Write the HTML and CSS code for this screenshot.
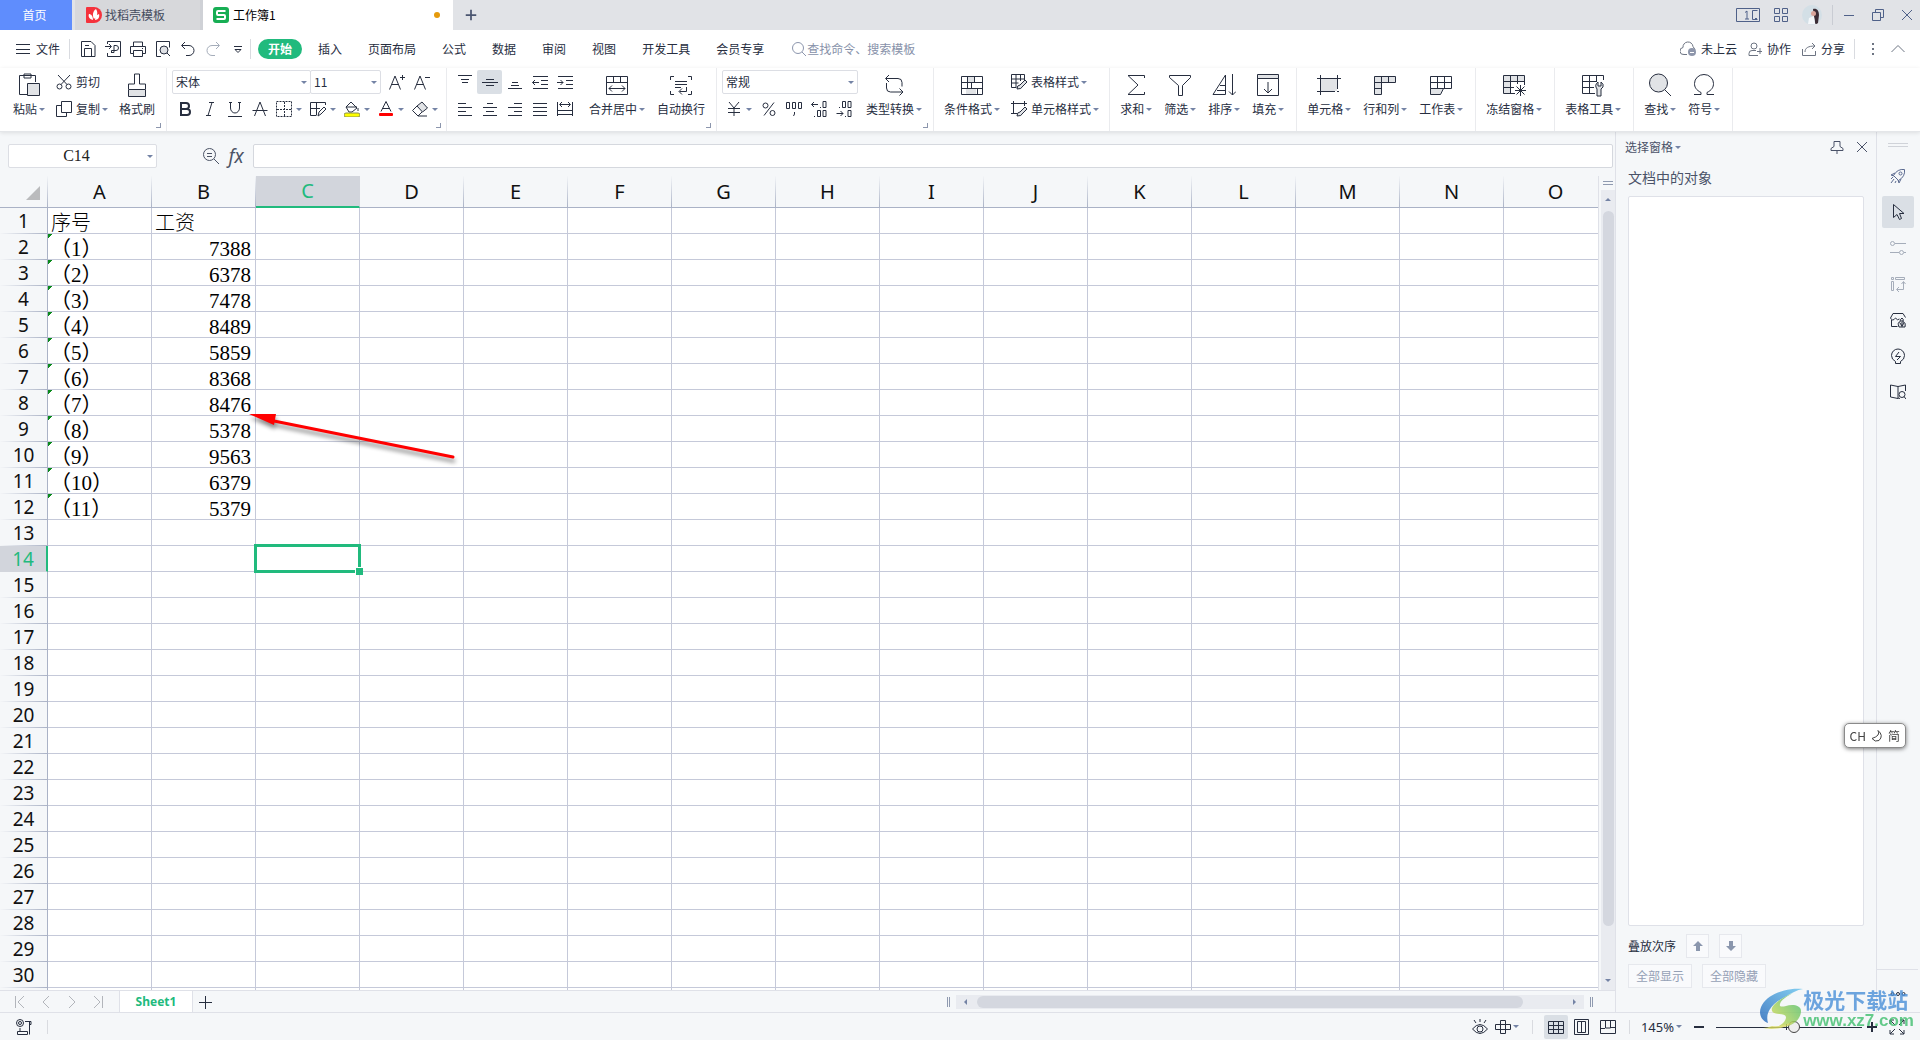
FILE: index.html
```html
<!DOCTYPE html>
<html lang="zh-CN">
<head>
<meta charset="utf-8">
<title>工作簿1</title>
<link rel="stylesheet" href="styles.css">
</head>
<body>
<header class="titlebar">
  <button class="tab tab-home">首页</button>
  <button class="tab tab-doc">
    <svg class="s16" viewBox="0 0 16 16"><path d="M1 0h7a8 8 0 0 1 0 16H1a1 1 0 0 1-1-1V1a1 1 0 0 1 1-1z" fill="#f5323c" stroke="none"/><path d="M7 13C3 12 2 9 3 7c2 0 4 2 4 6zM8 12C6 8 7 4 10 2c2 3 2 7-2 10zM9 13c0-3 1-5 4-6 1 3-1 6-4 6z" fill="#fff" stroke="none"/></svg>
    找稻壳模板
  </button>
  <button class="tab tab-active">
    <svg class="s16" viewBox="0 0 16 16"><rect width="16" height="16" rx="3" fill="#17ae54" stroke="none"/><path d="M12.500 4H5a1 1 0 0 0-1 1v2a1 1 0 0 0 1 1h6a1 1 0 0 1 1 1v2a1 1 0 0 1-1 1H3.500" fill="none" stroke="#fff" stroke-width="2"/></svg>
    工作簿1<span class="unsaved"></span>
  </button>
  <button class="newtab" aria-label="新建"><svg class="s16" viewBox="0 0 16 16"><path d="M8 2v12M2 8h12" stroke="#4a5570" stroke-width="2"/></svg></button>
  <div class="window-tools">
    <button aria-label="布局"><svg class="s24" viewBox="0 0 24 24"><path d="M.5 5.500h23v13H.5zM21.500 7.500h-5v9h5M19 15.500h2M9 9.500l2-1.500v8M9 16h4"/></svg></button>
    <button aria-label="应用"><svg class="s16" viewBox="0 0 16 16"><path d="M1.500 1.500h5v5h-5zM9.500 1.500h5v5h-5zM1.500 9.500h5v5h-5zM9.500 9.500h5v5h-5z"/></svg></button>
    <button aria-label="账户"><svg class="s20" viewBox="0 0 20 20"><circle cx="10" cy="10" r="10" fill="#d3dfe6" stroke="none"/><path d="M11 4c4-1 6 2 6 6l-1 8c-2 2-3 1-3-1l-1-5z" fill="#3b2c35" stroke="none"/><circle cx="11.500" cy="8.500" r="2.500" fill="#d9a49a" stroke="none"/><path d="M6 19l1-6 5-2 1 8z" fill="#f4f7fa" stroke="none"/></svg></button>
    <i class="vline"></i>
    <button aria-label="最小化"><svg class="s12" viewBox="0 0 12 12"><path d="M1 6.500h10"/></svg></button>
    <button aria-label="还原"><svg class="s12" viewBox="0 0 12 12"><path d="M.5 3.500h8v8h-8zM3.500 3V.5h8v8H9"/></svg></button>
    <button aria-label="关闭"><svg class="s12" viewBox="0 0 12 12"><path d="M1 1l10 10M11 1L1 11"/></svg></button>
  </div>
</header>

<nav class="menubar">
  <button class="file"><svg class="s14" viewBox="0 0 14 14"><path d="M0 2.500h14M0 7.500h14M0 11.500h14"/></svg>文件</button>
  <i class="vline"></i>
  <div class="quick">
    <button class="ib" aria-label="保存"><svg class="s16" viewBox="0 0 16 16"><path d="M2 .5h9l4 4v11H1.500v-15zM4.500 15V7.500h7V15M5 4.500h4"/></svg></button>
    <button class="ib" aria-label="输出为PDF"><svg class="s16" viewBox="0 0 16 16"><path d="M2.500 3V.5h13v15h-13V12M0 5.500h6M4 3l2.500 2.500L4 8M6 11.500h3v-7h2a2 2 0 0 1 0 5H6.500v2"/></svg></button>
    <button class="ib" aria-label="打印"><svg class="s16" viewBox="0 0 16 16"><path d="M3.500 5V1h9v4M3.500 12.500h-3v-7h15v7h-3M3.500 9.500h9v6h-9zM12 7.500h1"/></svg></button>
    <button class="ib" aria-label="打印预览"><svg class="s16" viewBox="0 0 16 16"><path d="M6 15.500H1.500V.5h13v6"/><circle cx="9" cy="9" r="4" fill="#dfe1e5"/><path d="M12 12l3 3"/></svg></button>
    <button class="ib" aria-label="撤销"><svg class="s16" viewBox="0 0 16 16"><path d="M5 1L1.500 4.500 5 8M2 4.500h7a5 5 0 0 1 0 10H6"/></svg></button>
    <button class="ib faint" aria-label="恢复"><svg class="s16" viewBox="0 0 16 16"><path d="M11 1l3.500 3.500L11 8M14 4.500H7a5 5 0 0 0 0 10h3"/></svg></button>
    <button class="ib" aria-label="更多命令"><svg class="s12" viewBox="0 0 12 12"><path d="M2 3.500h8M3 6.500l3 3 3-3z"/></svg></button>
  </div>
  <i class="vline"></i>
  <button class="menu current">开始</button>
  <button class="menu">插入</button>
  <button class="menu">页面布局</button>
  <button class="menu">公式</button>
  <button class="menu">数据</button>
  <button class="menu">审阅</button>
  <button class="menu">视图</button>
  <button class="menu">开发工具</button>
  <button class="menu">会员专享</button>
  <label class="search"><svg class="s16" viewBox="0 0 16 16"><circle cx="7" cy="7" r="5.500"/><path d="M11 11l4 4"/></svg><input type="text" placeholder="查找命令、搜索模板"></label>
  <div class="cloud">
    <button><svg class="s16" viewBox="0 0 16 16"><path d="M7 13.500H4a3.500 3.500 0 0 1-1-7 5 5 0 0 1 10-1l2 3"/><circle cx="12" cy="11" r="4" fill="#8e96ab" stroke="none"/><path d="M10 11.500h4" stroke="#fff"/></svg>未上云</button>
    <button><svg class="s14" viewBox="0 0 14 14"><circle cx="6" cy="4" r="3"/><path d="M1 13.500v-2q0-3 3-3h4M1 13.500h9M12 6v6M9 9.500h5"/></svg>协作</button>
    <button><svg class="s14" viewBox="0 0 14 14"><path d="M.5 7v6.500h13V9M3 10c0-4 3-6 10-6M10 1l3 3-3 3"/></svg>分享</button>
    <i class="vline"></i>
    <button aria-label="更多"><svg class="s14" viewBox="0 0 14 14"><path d="M7 1v2M7 6v2M7 11v2" stroke-width="2"/></svg></button>
    <button aria-label="收起功能区"><svg class="s14" viewBox="0 0 14 14"><path d="M.5 10L7 3.500l6.500 6.500"/></svg></button>
  </div>
</nav>

<section class="ribbon">
  <div class="group group-clip">
    <button class="big"><svg class="s24" viewBox="0 0 24 24"><path d="M10 21.500H2.500v-19H18.500V9M7 1h7v4H7z"/><path d="M10.500 10.500h12v12h-12z" fill="#e1e3e6"/></svg><span class="caret">粘贴</span></button>
    <div class="rows">
      <button class="small"><svg class="s16" viewBox="0 0 16 16"><circle cx="3.500" cy="12.500" r="2.500"/><circle cx="12.500" cy="12.500" r="2.500"/><path d="M2 1l9 9.500M14 1L5 10.500"/></svg>剪切</button>
      <button class="small"><svg class="s16" viewBox="0 0 16 16"><path d="M5.500.5h10v11h-10zM5 4.500H.5v11h10V12"/></svg><span class="caret">复制</span></button>
    </div>
    <button class="big"><svg class="s24" viewBox="0 0 24 24"><path d="M3.500 16.500h17v7h-17z" fill="#e1e3e6"/><path d="M3.500 16v-5H9.500V1h5v10h6v5"/></svg><span>格式刷</span></button>
    <i class="corner"></i>
  </div>

  <div class="group group-edit">
    <div class="rows">
      <div class="row">
        <span class="combo combo-font"><select aria-label="字体"><option>宋体</option></select></span>
        <span class="combo combo-size"><select aria-label="字号"><option>11</option></select></span>
        <button class="ib" aria-label="增大字号"><svg class="s16" viewBox="0 0 16 16"><path d="M.5 15.500L6 2l5.500 13.500M2.500 10.500h7M11 3.500h5M13.500 1v5"/></svg></button>
        <button class="ib" aria-label="减小字号"><svg class="s16" viewBox="0 0 16 16"><path d="M.5 15.500L6 2l5.500 13.500M2.500 10.500h7M11 3.500h5"/></svg></button>
      </div>
      <div class="row">
        <button class="ib" aria-label="加粗"><svg class="s16" viewBox="0 0 16 16"><path d="M4 2h5a3 3 0 0 1 0 6H4zM4 8h6a3 3 0 0 1 0 6H4z" stroke-width="2"/></svg></button>
        <button class="ib" aria-label="倾斜"><svg class="s16" viewBox="0 0 16 16"><path d="M7 1.500h5M4 14.500h5M10 1.500l-4 13"/></svg></button>
        <button class="ib" aria-label="下划线"><svg class="s16" viewBox="0 0 16 16"><path d="M3.500 1v6a4.500 5 0 0 0 9 0V1M2 1.500h3M11 1.500h3M1 15.500h14"/></svg></button>
        <button class="ib" aria-label="删除线"><svg class="s16" viewBox="0 0 16 16"><path d="M2.500 15L8 1l5.500 14M.5 9.500h15"/></svg></button>
        <button class="ib drop" aria-label="边框"><svg class="s16" viewBox="0 0 16 16"><path d="M.5.5h15v15H.5zM8.500 1v14M1 8.500h14" stroke-dasharray="2 1"/></svg></button>
        <button class="ib drop" aria-label="绘制边框"><svg class="s16" viewBox="0 0 16 16"><path d="M15.500 4V1.500H.5v13h6M6.500 2v12M1 7.500h9M8 15l1-4 5-5 2 2-5 5z"/></svg></button>
        <button class="ib drop" aria-label="填充颜色"><svg class="s16" viewBox="0 0 16 16"><path d="M2 6l5-5 6 6-5 4H5zM2 6h11M14 7v3"/><rect y="12" width="16" height="4" rx="2" fill="#ff0" stroke="#8a8f52"/></svg></button>
        <button class="ib drop" aria-label="字体颜色"><svg class="s16" viewBox="0 0 16 16"><path d="M3 10.500L8 .5l5 10M5 7.500h6"/><rect x="1" y="12" width="14" height="3" rx="1" fill="#f00" stroke="none"/></svg></button>
        <button class="ib drop" aria-label="清除"><svg class="s16" viewBox="0 0 16 16"><path d="M5 5l5-4 5.500 6-5 4z" fill="#e1e3e6"/><path d="M10 11l-4 4L.5 9.500 5 5M6 15h9"/></svg></button>
      </div>
    </div>
    <i class="corner"></i>
  </div>

  <div class="group group-edit">
    <div class="rows">
      <div class="row">
        <button class="ib" aria-label="顶端对齐"><svg class="s16" viewBox="0 0 16 16"><path d="M1 1.500h14M4 5.500h8M5 8.500h6"/></svg></button>
        <button class="ib pressed" aria-label="垂直居中"><svg class="s16" viewBox="0 0 16 16"><path d="M4 5.500h8M0 8.500h16M4 11.500h8"/></svg></button>
        <button class="ib" aria-label="底端对齐"><svg class="s16" viewBox="0 0 16 16"><path d="M5 8.500h6M4 11.500h8M1 14.500h14"/></svg></button>
        <button class="ib" aria-label="减少缩进"><svg class="s16" viewBox="0 0 16 16"><path d="M1 2.500h15M9 6.500h7M9 10.500h7M1 14.500h15M7 8.500H.5M3 6L.5 8.500 3 11"/></svg></button>
        <button class="ib" aria-label="增加缩进"><svg class="s16" viewBox="0 0 16 16"><path d="M1 2.500h15M9 6.500h7M9 10.500h7M1 14.500h15M0 8.500h6M3.500 6L6 8.500 3.500 11"/></svg></button>
      </div>
      <div class="row">
        <button class="ib" aria-label="左对齐"><svg class="s16" viewBox="0 0 16 16"><path d="M1 2.500h8M1 6.500h14M1 10.500h8M1 14.500h14"/></svg></button>
        <button class="ib" aria-label="水平居中"><svg class="s16" viewBox="0 0 16 16"><path d="M5 2.500h6M1 6.500h14M4 10.500h8M1 14.500h14"/></svg></button>
        <button class="ib" aria-label="右对齐"><svg class="s16" viewBox="0 0 16 16"><path d="M7 2.500h8M1 6.500h14M7 10.500h8M1 14.500h14"/></svg></button>
        <button class="ib" aria-label="两端对齐"><svg class="s16" viewBox="0 0 16 16"><path d="M1 2.500h14M1 6.500h14M1 10.500h14M1 14.500h14"/></svg></button>
        <button class="ib" aria-label="分散对齐"><svg class="s16" viewBox="0 0 16 16"><path d="M.5 1v14M15.500 1v14M3 3.500h10M5 1L2.500 3.500 5 6M11 1l2.500 2.500L11 6M1 9.500h14M1 13.500h14"/></svg></button>
      </div>
    </div>
    <div class="pair">
      <button class="big"><svg class="s24" viewBox="0 0 24 24"><path d="M1.500 3.500h21v18h-21zM2 9.500h20M8.500 4v5M15.500 4v5M4 15.500h16M7 12.500l-3 3 3 3M17 12.500l3 3-3 3"/></svg><span class="caret">合并居中</span></button>
      <button class="big"><svg class="s24" viewBox="0 0 24 24"><path d="M5 3.500H1.500V7M19 3.500h3.500V7M5 21.500H1.500V18M19 21.500h3.500V18M6 8.500h12M6 11.500h12M6 14.500h6M17.500 14v4.500h-7M13 15.500l-3 3 3 3"/></svg><span>自动换行</span></button>
    </div>
    <i class="corner"></i>
  </div>

  <div class="group group-edit">
    <div class="rows">
      <div class="row"><span class="combo combo-number"><select aria-label="数字格式"><option>常规</option></select></span></div>
      <div class="row">
        <button class="ib drop" aria-label="货币"><svg class="s16" viewBox="0 0 16 16"><path d="M3 1l5 6 5-6M2 7.500h12M2 11.500h12M8 7v8"/></svg></button>
        <button class="ib" aria-label="百分比"><svg class="s16" viewBox="0 0 16 16"><circle cx="4.500" cy="4.500" r="2.500"/><circle cx="11.500" cy="12" r="2.500"/><path d="M13 1.500l-10 13"/></svg></button>
        <button class="ib" aria-label="千位分隔"><svg class="s16" viewBox="0 0 16 16"><path d="M.5 1.500h3v6h-3zM6.500 1.500h3v6h-3zM12.500 1.500h3v6h-3zM8.500 11v2l-1 2"/></svg></button>
        <button class="ib" aria-label="增加小数位"><svg class="s16" viewBox="0 0 16 16"><path d="M12 .5h3v6h-3zM6.500 9.500h3v6h-3zM12 9.500h3v6h-3zM.5 3.500H7M3 1L.5 3.500 3 6M9.500 6v1M3.500 15v1"/></svg></button>
        <button class="ib" aria-label="减少小数位"><svg class="s16" viewBox="0 0 16 16"><path d="M6.500.5h3v6h-3zM12 .5h3v6h-3zM12 9.500h3v6h-3zM.5 12.500H7M4.500 10L7 12.500 4.500 15M3.500 6v1M9.500 15v1"/></svg></button>
      </div>
    </div>
    <button class="big near"><svg class="s24" viewBox="0 0 24 24"><path d="M7 2L3.500 5.500 7 9M4 5.500h12q4 0 4 4v4M4.500 10v5q0 4 4 4H21M17.500 15.500l3.500 3.500-3.500 3.500"/></svg><span class="caret">类型转换</span></button>
    <i class="corner"></i>
  </div>

  <div class="group group-style">
    <button class="big"><svg class="s24" viewBox="0 0 24 24"><path d="M8 4h6v5H8zM6 15h10v6H6z" fill="#e1e3e6" stroke="none"/><path d="M1.500 3.500h21v18h-21zM2 9.500h20M2 15.500h20M7.500 4v11M14.500 4v5M11.500 10v5M17.500 15v6"/></svg><span class="caret">条件格式</span></button>
    <div class="rows">
      <button class="small"><svg class="s16" viewBox="0 0 16 16"><path d="M13.500 6V.5H.5v13h5M.5 5h13M.5 9h7M5 1v12M9.500 1v6"/><path d="M6 15q0-4 3-4l5-5 2 2-5 5q0 2-5 2z" fill="#e1e3e6"/></svg><span class="caret">表格样式</span></button>
      <button class="small"><svg class="s16" viewBox="0 0 16 16"><path d="M0 2.500h16M2.500 0v13M0 12.500h6M13.500 0v5"/><path d="M6 15q0-4 3-4l5-5 2 2-5 5q0 2-5 2z" fill="#e1e3e6"/></svg><span class="caret">单元格样式</span></button>
    </div>
  </div>

  <div class="group">
    <button class="big"><svg class="s24" viewBox="0 0 24 24"><path d="M20.500 5V2.500H4L14 12 4 21.500h16.500V19"/></svg><span class="caret">求和</span></button>
    <button class="big"><svg class="s24" viewBox="0 0 24 24"><path d="M1.500 2.500h21v2l-8 8v10h-4v-10l-9-8z"/></svg><span class="caret">筛选</span></button>
    <button class="big"><svg class="s24" viewBox="0 0 24 24"><path d="M1 21.500L13.500 2v19.500zM8 12.500h5M5 17.500h8M20.500 1v21M17 18.500l3.500 3.500 3.500-3.500"/></svg><span class="caret">排序</span></button>
    <button class="big"><svg class="s24" viewBox="0 0 24 24"><path d="M1.500 1.500h21v4h-21z" fill="#e1e3e6"/><path d="M1.500 5.500h21v17h-21zM12 9v11M8 16l4 4 4-4"/></svg><span class="caret">填充</span></button>
  </div>

  <div class="group">
    <button class="big"><svg class="s24" viewBox="0 0 24 24"><path d="M4 6h16v12H4z" fill="#e1e3e6" stroke="none"/><path d="M0 5.500h24M3.500 2v20M20.500 2v14M0 18.500h18M20 18.500h2"/></svg><span class="caret">单元格</span></button>
    <button class="big"><svg class="s24" viewBox="0 0 24 24"><path d="M1.500 3.500h21v6h-14v12h-7z" fill="#e1e3e6"/><path d="M8.500 4v6M15.500 4v5M2 9.500h7M2 15.500h6"/></svg><span class="caret">行和列</span></button>
    <button class="big"><svg class="s24" viewBox="0 0 24 24"><path d="M1.500 3.500h21v12h-21zM8.500 4v11M15.500 4v11M2 9.500h20"/><path d="M1.500 15.500h13l-3 6h-10z" fill="#e1e3e6"/></svg><span class="caret">工作表</span></button>
  </div>

  <div class="group">
    <button class="big"><svg class="s24" viewBox="0 0 24 24"><path d="M2 3h20v6H2zM2 9h6v11H2z" fill="#e1e3e6" stroke="none"/><path d="M22.500 12V2.500h-21v18H13M2 8.500h20M8.500 3v17M15.500 3v8M2 14.500h10M18.500 12v11M13 17.500h11M14.500 13.500l8 8M22.500 13.500l-8 8"/></svg><span class="caret">冻结窗格</span></button>
  </div>
  <div class="group">
    <button class="big"><svg class="s24" viewBox="0 0 24 24"><path d="M22.500 7V2.500h-21v18H14M2 8.500h14M8.500 3v17M15.500 3v6M2 14.500h11"/><path d="M17 9v4h3V9q3 2 2 5l-2 2v7h-4v-7q-3-4 1-7z" fill="#e1e3e6"/></svg><span class="caret">表格工具</span></button>
  </div>
  <div class="group">
    <button class="big"><svg class="s24" viewBox="0 0 24 24"><circle cx="10.500" cy="10" r="9" fill="#e1e3e6"/><path d="M17 17l6 6"/></svg><span class="caret">查找</span></button>
    <button class="big"><svg class="s24" viewBox="0 0 24 24"><path d="M2 21.500h7v-2C4 17 2.500 14 2.500 10.500a9.500 9 0 0 1 19 0c0 3.500-1.500 6.500-6.500 9v2h7"/></svg><span class="caret">符号</span></button>
  </div>
</section>

<main class="work">
  <section class="book">
    <div class="formula">
      <span class="combo namebox"><input type="text" value="C14" aria-label="名称框"></span>
      <button aria-label="搜索函数"><svg class="s16" viewBox="0 0 16 16"><circle cx="6.500" cy="6.500" r="6"/><path d="M11 11l5 5M4 5.500h5M4 8.500h5"/></svg></button>
      <button class="fx">fx</button>
      <input class="fxinput" type="text" aria-label="编辑栏">
    </div>
    <div class="sheet">
      <div class="viewport">
        <table class="cells"><thead><tr id="cols"></tr></thead><tbody id="rows"></tbody></table>
        <svg class="pointer" viewBox="0 0 220 60"><path d="M24 11L208 48" stroke="#f00" stroke-width="3" stroke-linecap="round"/><path d="M4 5l27 0-2 11z" fill="#f00" stroke="none"/></svg>
      </div>
      <div class="vscroll">
        <i class="split"></i>
        <div class="vtrack"><b class="up"></b><i class="thumb"></i><b class="down"></b></div>
      </div>
    </div>
    <div class="sheets">
      <button class="nav" aria-label="第一个"><svg class="s12" viewBox="0 0 12 12"><path d="M1.500 0v12M10 0L4 6l6 6"/></svg></button>
      <button class="nav" aria-label="上一个"><svg class="s12" viewBox="0 0 12 12"><path d="M9 0L3 6l6 6"/></svg></button>
      <button class="nav" aria-label="下一个"><svg class="s12" viewBox="0 0 12 12"><path d="M3 0l6 6-6 6"/></svg></button>
      <button class="nav" aria-label="最后一个"><svg class="s12" viewBox="0 0 12 12"><path d="M10.500 0v12M2 0l6 6-6 6"/></svg></button>
      <button class="sheet-tab">Sheet1</button>
      <button class="add" aria-label="新建工作表"><svg class="s14" viewBox="0 0 14 14"><path d="M7.500 1v13M1 7.500h13"/></svg></button>
      <div class="hscroll"><i class="grip"></i><div class="htrack"><b class="left"></b><i class="thumb"></i><b class="right"></b></div><i class="grip"></i></div>
    </div>
  </section>

  <aside class="pane">
    <div class="pane-head"><button class="pane-title caret">选择窗格</button>
      <button class="ib push" aria-label="固定"><svg class="s14" viewBox="0 0 14 14"><path d="M4 1.500h6v5l3 2v2H1v-2l3-2zM7 11v3"/></svg></button>
      <button class="ib" aria-label="关闭窗格"><svg class="s12" viewBox="0 0 12 12"><path d="M1 1l10 10M11 1L1 11"/></svg></button>
    </div>
    <h2>文档中的对象</h2>
    <div class="objects"></div>
    <div class="order"><span>叠放次序</span>
      <button aria-label="上移"><svg class="s12" viewBox="0 0 12 12"><path d="M6 1l5 5H8v5H4V6H1z" fill="#8a96ad" stroke="none"/></svg></button>
      <button aria-label="下移"><svg class="s12" viewBox="0 0 12 12"><path d="M6 11l5-5H8V1H4v5H1z" fill="#8a96ad" stroke="none"/></svg></button>
    </div>
    <div class="show"><button>全部显示</button><button>全部隐藏</button></div>
  </aside>

  <aside class="rail">
    <i class="handle"></i>
    <button class="slate" aria-label="快速"><svg class="s16" viewBox="0 0 16 16"><path d="M14.500 1.500q1 7-6 11l-5-5q4-7 11-6zM5 5L1 7l3 1M11 11l-2 4-1-3M1 11l2-2M1 15l3-4M5 15l1-2"/><circle cx="10.500" cy="5.500" r="1.500"/></svg></button>
    <button class="pressed" aria-label="选择"><svg class="s16" viewBox="0 0 16 16"><path d="M3.500.5v13l3.500-3 2.500 5 2-1-2-5h4.500z"/></svg></button>
    <button class="faint" aria-label="属性"><svg class="s16" viewBox="0 0 16 16"><circle cx="2.500" cy="3.500" r="2"/><circle cx="11.500" cy="12.500" r="2"/><path d="M5 3.500h11M0 12.500h9M14 12.500h2"/></svg></button>
    <button class="faint" aria-label="分析"><svg class="s16" viewBox="0 0 16 16"><path d="M1.500 1.500h2v2h-2zM5.500 1.500h9v2h-9zM1.500 5.500h2v9h-2zM13.500 6v7.500H7M11.500 8l2-2.500 2 2.500M9 11l-2.500 2.500L9 16"/></svg></button>
    <button aria-label="素材"><svg class="s16" viewBox="0 0 16 16"><path d="M.5 6L3 1.500h10l2.500 4M.5 6q2 4 5 0 2 3 4 1M1.500 8v6.500h6"/><path d="M9 15q-2-5 1-5 0-3 2-4 2 1 1 4 3 0 2 5z" fill="#e1e3e6"/><path d="M12 8v7M10 11l2 3 2-3"/></svg></button>
    <button aria-label="帮助"><svg class="s16" viewBox="0 0 16 16"><path d="M5.500 15.500v-2q-4-2-4-6a6.500 6.500 0 0 1 13 0q0 4-4 6v2zM9 4L5.500 8.500h5L7 12"/></svg></button>
    <button aria-label="教程"><svg class="s16" viewBox="0 0 16 16"><path d="M8 2.500L.5 1v12L8 14.500V2.500L15.500 1v6M8 14l2 .5"/><circle cx="12" cy="10.500" r="3"/><path d="M14 12.500l2 2.500"/></svg></button>
    <div class="rail-end"><button aria-label="更多"><svg class="s16" viewBox="0 0 16 16"><circle cx="2.500" cy="8" r="1.500"/><circle cx="8" cy="8" r="1.500"/><circle cx="13.500" cy="8" r="1.500"/></svg></button></div>
  </aside>
</main>

<footer class="status">
  <button class="macro" aria-label="宏"><svg class="s16" viewBox="0 0 16 16"><circle cx="4" cy="4" r="3.500"/><circle cx="4" cy="4" r="1.500"/><path d="M9 2.500h6v3h-2M13.500 3v12.500M4 9v3M1.500 12.500h10v3h-10z"/></svg></button>
  <i class="vline"></i>
  <div class="views">
    <button aria-label="护眼"><svg class="s16" viewBox="0 0 16 16"><path d="M.5 10q7.500-9 15 0-7.500 9-15 0zM8 0v3M2 1l2 3M14 1l-2 3"/><circle cx="8" cy="10" r="3"/></svg></button>
    <button class="caret reading" aria-label="阅读模式"><svg class="s16" viewBox="0 0 16 16"><path d="M5.500 1.500h5v13h-5zM.5 5.500h15v5H.5z"/></svg></button>
    <i class="vline"></i>
    <div class="modes">
      <button class="pressed" aria-label="普通视图"><svg class="s16" viewBox="0 0 16 16"><path d="M.5 2.500h15v12H.5zM1 6.500h14M1 10.500h14M5.500 3v11M10.500 3v11"/></svg></button>
      <button aria-label="页面布局"><svg class="s16" viewBox="0 0 16 16"><path d="M.5.5h14v15H.5zM3.500 2.500h8v11h-8zM7.500 3v10"/></svg></button>
      <button aria-label="分页预览"><svg class="s16" viewBox="0 0 16 16"><path d="M.5 1.500h15v13H.5zM5.500 2v7h5V2M1 9.500h4M10.500 8.500H15"/></svg></button>
    </div>
    <i class="vline"></i>
    <button class="caret percent">145%</button>
    <button aria-label="缩小"><svg class="s12" viewBox="0 0 12 12"><path d="M1 6h10" stroke-width="2"/></svg></button>
    <input class="zoom" type="range" min="0" max="100" value="54" aria-label="显示比例">
    <button aria-label="放大"><svg class="s12" viewBox="0 0 12 12"><path d="M1 6h10M6 1v10" stroke-width="2"/></svg></button>
    <button aria-label="全屏"><svg class="s16" viewBox="0 0 16 16"><path d="M1 5V1h4M11 1h4v4M1 11v4h4M15 11v4h-4M1 1l5 5M15 1l-5 5M1 15l5-5M15 15l-5-5"/></svg></button>
  </div>
</footer>

<div class="ime">CH<svg class="s12" viewBox="0 0 12 12"><path d="M7 .5q3 5-6 8 3 4 7 2 5-5-1-10z"/></svg>简</div>
<div class="brand">
  <svg viewBox="0 0 44 42"><defs><linearGradient id="b" x1="0" y1="1" x2="1" y2="0"><stop offset="0" stop-color="#1f62b8"/><stop offset="1" stop-color="#66c4ef"/></linearGradient><linearGradient id="g" x1="1" y1="0" x2="0" y2="1"><stop offset="0" stop-color="#3dba6c"/><stop offset="1" stop-color="#e2dd4e"/></linearGradient></defs><path d="M44 1C24-1 2 9 1 24c0 5 3 9 8 11-3-10 3-19 17-26C32 5 38 2 44 1z" fill="url(#b)"/><path d="M34 5C20 11 11 18 13 23c2 5 13 1 14 6 0 4-4 8-11 11 18 0 26-9 26-17 0-6-9-7-15-5-4 1-7 1-6-2 1-4 7-8 13-11z" fill="url(#g)"/><path d="M13 38c-3 1-6 2-9 2 8 2 24 1 31-7-7 4-15 6-22 5z" fill="#d8d960"/></svg>
  <div><strong>极光下载站</strong><span>www.xz7.com</span></div>
</div>
<script src="script.js"></script>
</body>
</html>
```
FILE: styles.css
```css
* { box-sizing: border-box; }
:root { --ink: #272e3f; --soft: #7483a5; --line: #dfe1e8; --bg: #f5f7f9; --green: #21ba7d; --press: #dadfe5; }
body {
  margin: 0; height: 100vh; display: flex; flex-direction: column; overflow: hidden;
  background: var(--bg); color: var(--ink);
  font: 12px/16px "Noto Sans CJK SC", "Noto Sans", sans-serif;
}
button { border: 0; padding: 0; margin: 0; background: none; color: inherit; font: inherit; display: flex; align-items: center; justify-content: center; white-space: nowrap; flex: none; }
input, select { font: inherit; color: inherit; border: 0; margin: 0; outline: 0; background: none; min-width: 0; }
svg { fill: none; stroke: currentColor; flex: none; display: block; }
.s12 { width: 12px; height: 12px; }
.s14 { width: 14px; height: 14px; }
.s16 { width: 16px; height: 16px; }
.s20 { width: 20px; height: 20px; }
.s24 { width: 24px; height: 24px; }
.vline { width: 1px; height: 20px; background: #d9dbe0; flex: none; }
.faint { color: #a5adba; }
.pressed { background: var(--press); border-radius: 2px; }
.caret::after { content: ""; border: 3px solid transparent; border-top-color: var(--soft); border-bottom: 0; display: inline-block; margin-left: 2px; vertical-align: 3px; }

/* title bar */
.titlebar { display: flex; height: 30px; background: #e1e3e7; flex: none; }
.tab { height: 30px; }
.tab-home { width: 72px; padding-right: 3px; background: #5f8dfd; color: #fff; margin-right: 3px; }
.tab-doc { width: 128px; padding-left: 11px; gap: 3px; justify-content: flex-start; background: #d7d8db; border-right: 3px solid #cfd1d6; color: #454c5e; }
.tab-active { width: 250px; padding: 0 13px 0 10px; gap: 4px; justify-content: flex-start; background: #fff; color: #000; }
.unsaved { width: 6px; height: 6px; border-radius: 50%; background: #e59a0c; margin-left: auto; }
.newtab { width: 36px; }
.newtab svg { width: 14px; }
.window-tools { margin-left: auto; display: flex; align-items: center; gap: 13px; padding-right: 7px; color: #4f6189; }
.window-tools .vline { margin: 0 -3px 0 -3px; background: #c9ccd3; }
.window-tools button:nth-last-child(-n+2) { margin-left: 4px; }

/* menu bar */
.menubar { display: flex; align-items: center; height: 38px; background: #fff; flex: none; }
.file { gap: 6px; padding: 0 9px 0 16px; }
.quick { display: flex; padding: 0 0 0 5px; }
.ib { width: 25px; height: 24px; }
.drop { width: 34px; }
.drop::after { content: ""; border: 3px solid transparent; border-top-color: var(--soft); border-bottom: 0; margin-left: 4px; }
.menu { padding: 0 13px; height: 20px; }
.menu.current { padding: 0 10px; margin: 0 3px 0 7px; border-radius: 10px; background: var(--green); color: #fff; font-weight: 700; }
.search { display: flex; align-items: center; margin-left: 14px; color: #8c96ad; }
.search input { width: 160px; padding: 0; }
.search input::placeholder { color: #8791a9; opacity: 1; }
.cloud { margin-left: auto; display: flex; align-items: center; gap: 11px; padding-right: 15px; }
.cloud button { gap: 5px; }
.cloud svg { color: #6d7482; }
.cloud .vline { margin: 0 0 0 -2px; }

/* ribbon */
.ribbon { display: flex; height: 64px; background: #fff; border-bottom: 1px solid #e4e6e9; box-shadow: 0 1px 4px #0000001a; flex: none; position: relative; }
.group { display: flex; gap: 12px; padding: 0 12px 0 10px; border-right: 1px solid #eaebee; position: relative; }
.group-clip { gap: 11px; padding: 0 11px 0 13px; }
.group-edit { gap: 0; padding: 0 4px 0 5px; }
.group-style { gap: 11px; padding-right: 10px; }
.pair { display: flex; gap: 12px; padding: 0 7px 0 12px; }
.near { margin: 0 7px 0 8px; }
.big { flex-direction: column; justify-content: flex-start; gap: 4px; padding-top: 5px; height: 60px; }
.rows { display: flex; flex-direction: column; gap: 3px; padding-top: 2px; }
.row { display: flex; height: 24px; }
.small { height: 24px; gap: 4px; justify-content: flex-start; }
.corner { position: absolute; right: 5px; bottom: 3px; width: 5px; height: 5px; border: solid #8c96ad; border-width: 0 1px 1px 0; }
.combo { display: flex; position: relative; border: 1px solid #dcdee4; border-radius: 2px; background: #fff; height: 24px; }
.combo::after { content: ""; position: absolute; right: 3px; top: 10px; border: 3px solid transparent; border-top-color: var(--soft); border-bottom: 0; }
.combo select { appearance: none; width: 100%; padding: 0 3px; }
.combo-font { width: 139px; }
.combo-size { width: 71px; margin: 0 3px 0 -1px; }
.combo-number { width: 136px; }

/* workbook */
.work { flex: 1; display: flex; min-height: 0; }
.book { flex: 1; display: flex; flex-direction: column; min-width: 0; }
.formula { display: flex; align-items: center; height: 44px; padding: 4px 2px 0 8px; flex: none; color: #4b5365; }
.namebox { width: 149px; margin: 0 46px 0 0; }
.namebox input { width: 100%; padding: 0 12px 0 0; text-align: center; font: 16px "Liberation Serif", serif; color: #222; }
.fx { width: 34px; font: italic 19px "Noto Sans", sans-serif; }
.fxinput { flex: 1; height: 24px; border: 1px solid #d5d8de; border-radius: 2px; background: #fff; }
.sheet { flex: 1; display: flex; min-height: 0; }
.viewport { flex: 1; min-width: 0; overflow: hidden; position: relative; border-right: 1px solid var(--line); }
.cells { border-collapse: separate; border-spacing: 0; table-layout: fixed; width: 0; font-size: 20px; color: #000; }
.cells th { font: 20px/24px "Noto Sans", sans-serif; padding: 0; background: var(--bg); color: #111; }
.cells thead th { width: 104px; height: 32px; border-bottom: 1px solid #a9b1c5; border-right: 1px solid; border-image: linear-gradient(transparent, #a9b1c5) 1; }
.cells thead th:first-child { width: 48px; vertical-align: bottom; }
.cells thead th.on { background: #d2d5dc; border-image: none; border-color: #d2d5dc; border-bottom: 2px solid var(--green); color: var(--green); }
.allmark { display: block; margin: 0 7px 7px auto; border: 7px solid #babbbd; border-top-color: transparent; border-left-color: transparent; width: 0; }
.cells tbody th { height: 26px; font-size: 19px; border-bottom: 1px solid; border-right: 1px solid; border-image: linear-gradient(to right, transparent, #a9b1c5) 1; }
.cells tbody th.on { background: #d2d5dc; border-image: none; border-color: #d2d5dc; border-right: 2px solid var(--green); color: var(--green); }
.cells td { height: 26px; padding: 5px 4px 0 2px; border: solid #c5c9d9; border-width: 0 1px 1px 0; background: #fff; font: 21px/20px "Liberation Serif", "Noto Sans CJK SC", serif; text-spacing-trim: space-all; white-space: nowrap; position: relative; }
.cells td.title { padding: 2px 3px 0; font: 300 20px/23px "Noto Sans CJK SC", sans-serif; }
.cells td.num { text-align: right; }
.cells td.flag { background: linear-gradient(135deg, #0a8a1c 3px, #fff 3px); }
.cells td.active { z-index: 1; }
.cells td.active::before { content: ""; position: absolute; inset: -2px; border: 3px solid var(--green); }
.cells td.active::after { content: ""; position: absolute; right: -4px; bottom: -4px; width: 7px; height: 7px; background: var(--green); border: solid #fff; border-width: 1px 0 0 1px; }
.pointer { position: absolute; left: 245px; top: 233px; z-index: 2; width: 220px; height: 60px; filter: drop-shadow(1px 4px 2px #0007); }
.vscroll { width: 16px; display: flex; flex-direction: column; align-items: flex-end; flex: none; }
.split { width: 10px; height: 4px; margin: 5px 2px 5px; border: solid #8f9ab0; border-width: 1px 0; }
.vtrack { width: 14px; flex: 1; background: #e9ebf0; display: flex; flex-direction: column; align-items: center; padding: 8px 0; }
.vtrack .thumb { flex: 1; width: 11px; margin: 10px 0 53px; border-radius: 6px; background: #d4d7df; }
.vtrack b, .htrack b { border: 3px solid transparent; }
.vtrack .up { border-top: 0; border-bottom-color: var(--soft); }
.vtrack .down { border-bottom: 0; border-top-color: var(--soft); }
.htrack .left { border-left: 0; border-right-color: var(--soft); }
.htrack .right { border-right: 0; border-left-color: var(--soft); }
.sheets { height: 22px; display: flex; align-items: center; border-top: 1px solid var(--line); padding: 0 22px 0 7px; flex: none; color: #b2b5bb; }
.nav { width: 26px; }
.sheet-tab { width: 74px; height: 21px; margin-left: 8px; background: #fff; border: solid var(--line); border-width: 0 1px; color: var(--green); font: 700 12px "Noto Sans", sans-serif; }
.add { width: 24px; color: var(--ink); }
.hscroll { margin-left: auto; width: calc(40% + 12px); display: flex; align-items: center; gap: 6px; }
.grip { width: 3px; height: 10px; border: solid #8f9ab0; border-width: 0 1px; }
.htrack { flex: 1; height: 14px; background: #e9ebf0; display: flex; align-items: center; padding: 0 8px; }
.htrack .thumb { flex: 1; height: 12px; margin: 0 50px 0 10px; border-radius: 6px; background: #d4d7df; }

/* selection pane */
.pane { width: 261px; border-left: 1px solid var(--line); padding: 0 12px 24px; display: flex; flex-direction: column; flex: none; }
.pane-head { display: flex; align-items: center; height: 30px; margin: 0 -10px 0 -3px; color: #4a5268; }
.push { margin-left: auto; }
.pane h2 { margin: 0; padding-bottom: 4px; font-size: 14px; line-height: 30px; font-weight: 400; color: #4a5268; }
.objects { flex: 1; border: 1px solid var(--line); border-radius: 2px; background: #fff; }
.order { display: flex; align-items: center; gap: 10px; margin: 8px 0 6px; }
.order button { width: 23px; height: 24px; border: 1px solid #e6e8ed; background: #f9fafc; }
.show { display: flex; gap: 10px; }
.show button { width: 64px; height: 24px; border: 1px solid #e6e8ed; background: #f9fafc; color: #95a0b5; }

/* right rail */
.rail { width: 44px; border-left: 1px solid var(--line); padding-right: 2px; display: flex; flex-direction: column; align-items: center; gap: 4px; flex: none; }
.handle { width: 20px; height: 4px; margin: 11px 0 9px; border: solid #d0d3d9; border-width: 1px 0; }
.rail button { width: 32px; height: 32px; }
.rail .slate { color: #5b6a90; }
.rail-end { margin-top: auto; align-self: stretch; padding: 8px 5px 2px; border-top: 1px solid var(--line); }

/* status bar */
.status { display: flex; align-items: center; height: 28px; border-top: 1px solid var(--line); flex: none; }
.status .vline { height: 14px; }
.macro { width: 47px; }
.views { margin-left: auto; display: flex; align-items: center; gap: 11px; padding-right: 15px; }
.reading { margin: 0 2px 0 -4px; }
.modes { display: flex; gap: 2px; margin-right: -2px; }
.modes button { width: 24px; height: 24px; }
.percent { font: 13px/16px "Noto Sans", sans-serif; }
.zoom { appearance: none; width: 146px; height: 16px; background: linear-gradient(var(--ink), var(--ink)) 0 8px / 100% 1px no-repeat, linear-gradient(var(--ink), var(--ink)) 48% 5px / 1px 6px no-repeat; }
.zoom::-webkit-slider-thumb { appearance: none; width: 12px; height: 12px; border-radius: 50%; border: 1px solid #444; background: #eee; }
.zoom + button { margin-left: -7px; }

/* floating items */
.ime { position: fixed; right: 14px; bottom: 292px; height: 25px; padding: 0 5px; display: flex; align-items: center; gap: 5px; border: 1px solid #8a8a8a; border-radius: 5px; background: #fff; color: #444; box-shadow: 0 1px 4px #0008; font-size: 12px; }
.brand { position: fixed; right: 6px; bottom: 8px; display: flex; opacity: .8; pointer-events: none; }
.brand svg { width: 44px; height: 42px; stroke: none; }
.brand div { display: flex; flex-direction: column; }
.brand strong { font-size: 21px; line-height: 22px; color: #4a8fd8; }
.brand span { font: 600 17px/22px "Liberation Sans", sans-serif; color: #40bf6e; }
```
FILE: script.js
```js
const letters = 'ABCDEFGHIJKLMNO'.split('');
const wages = [7388, 6378, 7478, 8489, 5859, 8368, 8476, 5378, 9563, 6379, 5379];
const lastRow = 30;

document.getElementById('cols').innerHTML =
  '<th><span class="allmark"></span></th>' +
  letters.map(l => `<th${l === 'C' ? ' class="on"' : ''}>${l}</th>`).join('');

function cell(row, col) {
  if (row === 1 && col === 0) return '<td class="title">序号</td>';
  if (row === 1 && col === 1) return '<td class="title">工资</td>';
  const wage = wages[row - 2];
  if (wage && col === 0) return `<td class="flag">（${row - 1}）</td>`;
  if (wage && col === 1) return `<td class="num">${wage}</td>`;
  if (row === 14 && col === 2) return '<td class="active"></td>';
  return '<td></td>';
}

let html = '';
for (let r = 1; r <= lastRow + 1; r++) {
  html += `<tr><th${r === 14 ? ' class="on"' : ''}>${r <= lastRow ? r : ''}</th>` +
    letters.map((_, c) => cell(r, c)).join('') + '</tr>';
}
document.getElementById('rows').innerHTML = html;
```
